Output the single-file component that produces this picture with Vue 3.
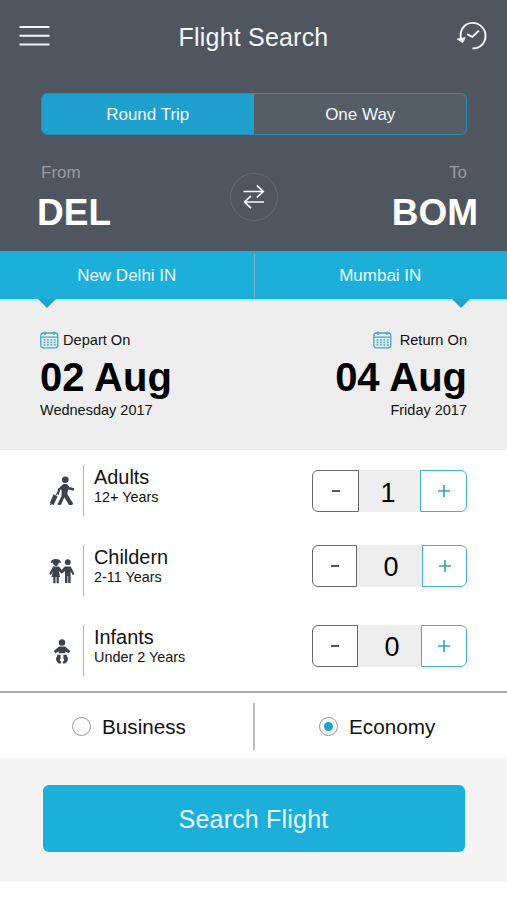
<script setup>
import { ref } from 'vue'

const trip = ref('round')
const cabin = ref('Economy')
const from = ref({ code: 'DEL', city: 'New Delhi IN' })
const to = ref({ code: 'BOM', city: 'Mumbai IN' })
const passengers = ref([
  { key: 'adults', label: 'Adults', note: '12+ Years', count: 1 },
  { key: 'children', label: 'Childern', note: '2-11 Years', count: 0 },
  { key: 'infants', label: 'Infants', note: 'Under 2 Years', count: 0 }
])
const dates = [
  { key: 'depart', label: 'Depart On', date: '02 Aug', day: 'Wednesday 2017' },
  { key: 'return', label: 'Return On', date: '04 Aug', day: 'Friday 2017' }
]
const cabins = ['Business', 'Economy']

function step(p, by) {
  p.count = Math.max(0, p.count + by)
}
function swap() {
  const previous = from.value
  from.value = to.value
  to.value = previous
}
</script>

<template>
  <main class="screen">
    <section class="top">
      <header class="bar">
        <svg class="menu" width="32" height="22" viewBox="0 0 32 22">
          <path d="M.5 2h30M.5 10.7h30M.5 19.4h30" />
        </svg>
        <h1>Flight Search</h1>
        <svg class="history" width="32" height="30" viewBox="0 0 32 30">
          <path d="M5 18.2C3.1 9.4 8.2 2.2 16.1 1.9C23.6 1.7 29.5 7.6 29.5 14.8C29.5 22.4 24 27.4 16.5 27.4" />
          <path d="M11 13.2l5.4 2.7 6.4-6.3" />
          <path class="solid" d="M1 18l8.2-1.4-2.4 5z" />
        </svg>
      </header>
      <div class="tabs">
        <button :class="{ on: trip === 'round' }" @click="trip = 'round'">Round Trip</button>
        <button :class="{ on: trip === 'oneway' }" @click="trip = 'oneway'">One Way</button>
      </div>
      <div class="route">
        <div class="port"><span>From</span><strong>{{ from.code }}</strong></div>
        <button class="swap" @click="swap">
          <svg width="24" height="26" viewBox="0 0 24 26">
            <path d="M1.5 7.5H21M14.8 1.3L21.2 7.5l-6.4 6M22 18H3M9 11.8L2.6 18l6.4 6.2" />
          </svg>
        </button>
        <div class="port to"><span>To</span><strong>{{ to.code }}</strong></div>
      </div>
    </section>

    <section class="cities">
      <div class="city">{{ from.city }}</div>
      <div class="city right">{{ to.city }}</div>
    </section>

    <section class="dates">
      <div v-for="d in dates" :key="d.key" class="date" :class="d.key">
        <div class="date-label">
          <svg width="19" height="18" viewBox="0 0 19 18">
            <rect x=".8" y="2" width="17" height="14.8" rx="2.5" />
            <path d="M1 6.2h17M5 .5v3.4M14 .5v3.4" />
            <path class="dots" d="M3.6 9h12M3.6 11.5h12M3.6 14h12" />
          </svg>
          <span>{{ d.label }}</span>
        </div>
        <strong>{{ d.date }}</strong>
        <small>{{ d.day }}</small>
      </div>
    </section>

    <section class="passengers">
      <div v-for="p in passengers" :key="p.key" class="passenger" :class="p.key">
        <div class="figure">
          <svg v-if="p.key === 'adults'" width="26" height="30" viewBox="0 0 26 30">
            <circle cx="16.3" cy="3.8" r="3.3" />
            <path d="M14.4 8L18 7.9 20.3 11 25.2 12.3 24.8 14.8 19 13.5 18.4 18.3 21.1 22.7 24 27.3 23.3 29H20L15.3 21.3 12.2 28.7 9 29 8.6 28.1 12.6 19.8 12.5 13 11 14.5 9.7 18.8 7.9 18.2 9 13z" />
            <path d="M4.6 18.2L8.6 20.4 4.6 28.9 .8 27z" />
            <path class="line" d="M7 19.6l1.8-3.7" />
            <circle cx="1.8" cy="28.4" r=".8" />
          </svg>
          <svg v-else-if="p.key === 'children'" width="26" height="26" viewBox="0 0 26 26">
            <path d="M1.8 5.1C2 2.5 3.5 1 6.8 1s5 1.5 5.3 4.1L9.7 4.8C9.4 7 8.3 7.9 7 7.9S4.5 7 4 4.8z" />
            <path d="M4 8.5h6L12.8 12 15.7 8.5h6L25.5 16 23.8 17 21.6 13.6V25H19.2V18H18.5V25H16V13L12.9 15.8 9.8 13 11 19H9.8V25.2H7.6V19H6.5V25.2H4.3V19H2.5L4 13.2 2 17 .2 16z" />
            <circle cx="18.8" cy="4.2" r="2.9" />
          </svg>
          <svg v-else width="18" height="25" viewBox="0 0 18 25">
            <circle cx="9" cy="3.5" r="3.2" />
            <path d="M6 7.6h6l5.2 4.4-1.4 2.2-3.4-1.7V14.3H5.6v-1.8L2.2 14.2.8 12z" />
            <path d="M4.6 15.8h3v3.7L6.6 21.2 8.4 23 7.4 24.8C4.8 24.3 3 22.2 3 19.5zM13.4 15.8h-3v3.7l1 1.7L9.6 23l1 1.8c2.6-.5 4.4-2.6 4.4-5.3z" />
          </svg>
        </div>
        <div class="who"><b>{{ p.label }}</b><small>{{ p.note }}</small></div>
        <div class="stepper">
          <button class="minus" @click="step(p, -1)"><i></i></button>
          <span>{{ p.count }}</span>
          <button class="plus" @click="step(p, 1)">
            <svg width="12" height="12" viewBox="0 0 12 12"><path d="M0 6h12M6 0v12" /></svg>
          </button>
        </div>
      </div>
    </section>

    <section class="cabins">
      <label v-for="c in cabins" :key="c" :class="{ picked: cabin === c }" @click="cabin = c">
        <i class="radio"></i><span>{{ c }}</span>
      </label>
    </section>

    <footer class="foot"><button>Search Flight</button></footer>
  </main>
</template>

<style>
body { margin: 0; background: #fff; }
</style>

<style scoped>
* { box-sizing: border-box; }
.screen { width: 507px; height: 900px; overflow: hidden; background: #fff; color: #111; font-family: "Liberation Sans", Arial, sans-serif; }
button { font-family: inherit; margin: 0; padding: 0; border: 0; background: none; }
svg { display: block; fill: none; }
strong, small, b { display: block; }

.top { height: 251px; background: #50565f; color: #f3f8fd; }
.bar { height: 93px; display: grid; grid-template-columns: 80px 1fr 80px; align-items: start; }
.bar h1 { margin: 22px 0 0; text-align: center; font-size: 25px; font-weight: 400; line-height: 30px; letter-spacing: .2px; }
.menu { margin: 25px 0 0 19px; stroke: #eef5fc; stroke-width: 2; }
.history { margin: 21px 0 0 29px; stroke: #f3f8fd; stroke-width: 1.9; }
.history .solid { fill: #f3f8fd; stroke-width: .8; }
.tabs { display: flex; width: 426px; height: 42px; margin-left: 41px; border: 1.5px solid #2690b4; border-radius: 6px; overflow: hidden; background: #555d67; }
.tabs button { flex: 1; font-size: 17px; color: #f3f8fd; padding-top: 1px; }
.tabs button + button { padding-left: 1px; }
.tabs .on { background: #1fa0cf; }
.route { height: 116px; padding: 28px 30px 0 38px; display: grid; grid-template-columns: 1fr 48px 1fr; }
.port span { display: block; padding-left: 3px; font-size: 17px; line-height: 20px; color: #989ca2; }
.port strong { margin-top: 9px; font-size: 37px; line-height: 42px; color: #fff; margin-left: -1px; }
.port.to { text-align: right; }
.port.to span { padding-right: 10px; }
.port.to strong { margin-right: -1px; }
.swap { width: 48px; height: 48px; margin: 10px 0 0 -4px; border: 1px solid #656b73; border-radius: 50%; display: grid; place-items: center; }
.swap svg { stroke: #f7fafd; stroke-width: 1.7; }

.cities { height: 50px; display: flex; background: #1bafd9; border-bottom: 2px solid #b9eaf5; }
.city { position: relative; flex: 1; display: flex; align-items: center; justify-content: center; height: 48px; padding-top: 2px; font-size: 17px; color: #edfcff; }
.city.right::before { content: ""; position: absolute; left: 0; top: 3px; width: 1px; height: 44px; background: #78b4c9; }
.city::after { content: ""; position: absolute; top: 48px; left: 38px; border: 9px solid transparent; border-top-color: #1fa2d0; border-bottom: 0; }
.city.right::after { left: auto; right: 37px; }

.dates { height: 149px; padding: 30px 40px 0 40px; display: flex; justify-content: space-between; background: #eee; }
.date-label { display: flex; align-items: center; gap: 4px; height: 18px; font-size: 14.6px; }
.date svg { stroke: #38a7cf; stroke-width: 1.3; }
.date .dots { stroke-dasharray: 1.8 1.6; stroke-width: 1.5; }
.date strong { font-size: 40px; line-height: 46px; margin-top: 5px; color: #000; }
.date small { font-size: 14.5px; line-height: 18px; margin-top: 1px; }
.date.return { text-align: right; }
.return .date-label { justify-content: flex-end; gap: 8px; }

.passengers { height: 241px; padding-top: 15px; }
.passenger { height: 80px; padding: 0 40px 0 45px; display: flex; align-items: flex-start; }
.figure { width: 39px; height: 51px; display: grid; place-items: center; border-right: 1.5px solid #b7b7b7; padding-right: 5px; }
.figure svg { fill: #3d434c; }
.figure .line { stroke: #3d434c; stroke-width: 1; }
.infants .figure svg { margin-top: 1px; }
.who { flex: 1; padding: 0 0 0 10px; }
.who b { font-size: 19.9px; line-height: 24px; font-weight: 400; }
.who small { font-size: 14.4px; line-height: 16px; }
.stepper { width: 155px; height: 42px; margin-top: 5px; display: grid; grid-template-columns: 47px 1fr 47px; }
.children .stepper { grid-template-columns: 45px 1fr 45px; margin-top: 0; }
.infants .stepper { grid-template-columns: 46px 1fr 46px; margin-top: 0; }
.stepper span { display: grid; place-items: center; background: #eee; font-size: 27px; color: #000; padding: 4px 3px 0 0; }
.children .stepper span { padding: 3px 0 0 3px; }
.infants .stepper span { padding: 3px 0 0 5px; }
.stepper button { display: grid; place-items: center; background: #fff; }
.minus { border: 1.5px solid #66696c; border-radius: 6px 0 0 6px; }
.minus i { width: 8px; height: 2px; background: #555; }
.plus { border: 1.5px solid #42afd6; border-radius: 0 6px 6px 0; }
.plus svg { stroke: #329fc8; stroke-width: 1.6; }

.cabins { height: 67px; display: grid; grid-template-columns: 253px 254px; border-top: 2px solid #aaa; }
.cabins label { display: flex; align-items: flex-start; gap: 11px; padding: 22px 0 0 72px; font-size: 20.7px; line-height: 24px; }
.cabins label + label { position: relative; padding-left: 66px; }
.cabins label + label::before { content: ""; position: absolute; left: 0; top: 10px; width: 2px; height: 47px; background: #bcbcbc; }
.radio { width: 19px; height: 19px; margin-top: 2px; border: 1.5px solid #999; border-radius: 50%; display: grid; place-items: center; background: #fff; }
.picked .radio::after { content: ""; width: 9px; height: 9px; border-radius: 50%; background: #1fa0cf; }

.foot { height: 123px; padding: 27px 42px 0 43px; background: #f4f4f4; border-bottom: 1px solid #eee; }
.foot button { width: 100%; height: 67px; border-radius: 6px; background: #1bafd9; color: #edfcff; font-size: 25px; letter-spacing: .2px; padding: 2px 1px 0 0; }
</style>
